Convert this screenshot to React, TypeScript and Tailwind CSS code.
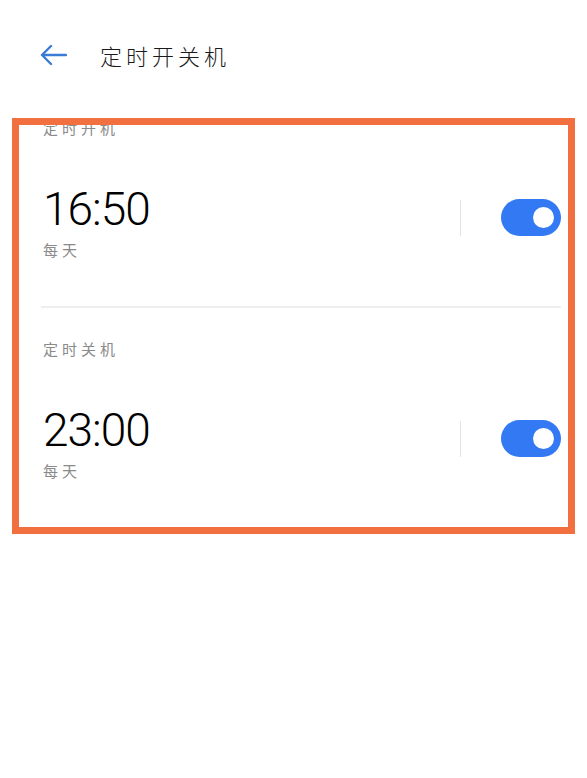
import React from "react";

function Toggle() {
  return (
    <div className="relative w-[60px] h-[37px] rounded-full bg-[#3479f4] shrink-0">
      <div className="absolute right-[7px] top-[8px] w-[21px] h-[21px] rounded-full bg-white" />
    </div>
  );
}

function Item({ label, time, divider }: { label: string; time: string; divider?: boolean }) {
  return (
    <div>
      <div className="pl-[43px] text-[15px] leading-[20px] text-[#8a8a8a] tracking-[4px]">{label}</div>
      <div className="flex items-start pl-[43px] pr-[26px] mt-[48px]">
        <div className="flex-1">
          <div
            className="text-[46px] leading-[46px] text-black font-light tracking-[-1px]"
            style={{ fontFamily: "Roboto, 'Noto Sans', sans-serif" }}
          >
            {time}
          </div>
          <div className="mt-[8px] text-[15px] leading-[20px] text-[#8a8a8a] tracking-[4px]">每天</div>
        </div>
        <div className="flex items-center mt-[13px]">
          <div className="w-px h-[36px] bg-[#e3e3e3]" />
          <div className="ml-[40px]">
            <Toggle />
          </div>
        </div>
      </div>
      {divider ? (
        <div className="mt-[46px] ml-[41px] mr-[26px] h-[2px] bg-[#eeeeee]" />
      ) : null}
    </div>
  );
}

export default function App() {
  return (
    <div
      className="relative w-[587px] h-[778px] bg-white overflow-hidden"
      style={{ fontFamily: "'Noto Sans CJK SC', 'Noto Sans', sans-serif" }}
    >
      <div className="h-[110px] flex items-center pl-[40px]">
        <svg width="27" height="24" viewBox="0 0 27 24" className="shrink-0">
          <path
            d="M26 12 H2 M11 3 L2 12 L11 21"
            fill="none"
            stroke="#3a7bd5"
            strokeWidth="2.4"
            strokeLinecap="round"
            strokeLinejoin="round"
          />
        </svg>
        <div className="ml-[33px] text-[22px] leading-[30px] text-[#1a1a1a] tracking-[4px] font-light">定时开关机</div>
      </div>
      <div className="mt-[8px]">
        <Item label="定时开机" time="16:50" divider />
        <div className="mt-[31px]">
          <Item label="定时关机" time="23:00" />
        </div>
      </div>
      <div className="absolute left-[12px] top-[118px] w-[563px] h-[416px] border-[7px] border-[#f2703f] pointer-events-none" />
    </div>
  );
}
